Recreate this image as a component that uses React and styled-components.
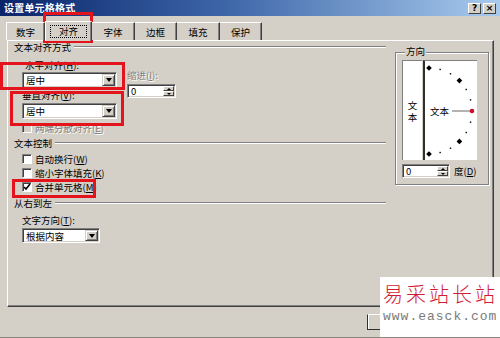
import styled, { createGlobalStyle } from "styled-components";

const Global = createGlobalStyle`
  html, body { margin: 0; padding: 0; background: #d4d0c8; }
  body {
    width: 500px; height: 338px; overflow: hidden;
    font-family: "Noto Sans CJK SC", "DejaVu Sans", sans-serif;
    font-size: 9.5px; line-height: 12px; color: #000;
  }
`;

const Window = styled.div`
  position: relative;
  width: 500px;
  height: 338px;
  background: #d4d0c8;
  display: flex;
  flex-direction: column;
  overflow: hidden;
  box-sizing: border-box;
  border-bottom: 1px solid #8a877f;
`;

const TitleBar = styled.div`
  height: 16px;
  flex: none;
  background: linear-gradient(to right, #0a246a 0%, #3d66a8 45%, #a9cbee 100%);
  display: flex;
  align-items: center;
  justify-content: space-between;
  padding: 0 4px 0 4px;
`;

const Title = styled.span`
  color: #fff;
  font-weight: bold;
  font-size: 10px;
  letter-spacing: 0.2px;
`;

const TitleButtons = styled.div`
  display: flex;
  gap: 2px;
  padding-top: 1px;
`;

const TitleButton = styled.span`
  width: 13px;
  height: 11px;
  box-sizing: border-box;
  background: #d4d0c8;
  border: 1px solid;
  border-color: #fff #404040 #404040 #fff;
  display: flex;
  align-items: center;
  justify-content: center;
  font-family: "DejaVu Sans", sans-serif;
  font-weight: bold;
  font-size: 9px;
  line-height: 9px;
`;

const TabStrip = styled.div`
  display: flex;
  align-items: flex-end;
  height: 20px;
  margin: 4px 0 0 6px;
`;

const Tab = styled.div`
  width: ${p => p.w}px;
  height: ${p => (p.active ? 20 : 18)}px;
  box-sizing: border-box;
  display: flex;
  align-items: center;
  justify-content: center;
  border-top: 1px solid #fff;
  border-left: ${p => (p.first || p.active ? "1px solid #fff" : "none")};
  border-right: 1px solid #404040;
  box-shadow: inset -1px 0 0 #808080;
  margin-bottom: ${p => (p.active ? -1 : 0)}px;
  background: #d4d0c8;
  position: relative;
  z-index: ${p => (p.active ? 2 : 1)};
`;

const FocusRect = styled.span`
  border: 1px dotted #000;
  padding: 0 8px;
  line-height: 11px;
`;

const Panel = styled.div`
  width: 487px;
  height: 267px;
  margin-left: 7px;
  box-sizing: border-box;
  border: 1px solid;
  border-color: #fff #404040 #404040 #fff;
  box-shadow: inset -1px -1px 0 #808080;
  display: flex;
`;

const LeftCol = styled.div`
  width: 387px;
  box-sizing: border-box;
  padding: 0 9px 0 6px;
  display: flex;
  flex-direction: column;
`;

const Heading = styled.div`
  display: flex;
  align-items: center;
  height: 12px;
  gap: 3px;
  margin-top: ${p => p.mt || 0}px;
  &::after {
    content: "";
    flex: 1;
    border-top: 1px solid #808080;
    border-bottom: 1px solid #fff;
  }
`;

const Label = styled.div`
  height: 12px;
  margin-top: ${p => p.mt || 0}px;
  padding-left: ${p => p.indent || 0}px;
  white-space: nowrap;
  color: ${p => (p.disabled ? "#808080" : "#000")};
  text-shadow: ${p => (p.disabled ? "1px 1px 0 #fff" : "none")};
`;

const AlignBlock = styled.div`
  display: flex;
  padding-left: 8px;
`;

const AlignCol = styled.div`
  display: flex;
  flex-direction: column;
  width: 95px;
`;

const IndentCol = styled.div`
  display: flex;
  flex-direction: column;
  margin-left: 10px;
  padding-top: 16px;
`;

const Field = styled.div`
  width: ${p => p.w}px;
  height: ${p => p.h || 16}px;
  margin-top: ${p => p.mt || 0}px;
  box-sizing: border-box;
  background: #fff;
  border: 1px solid;
  border-color: #808080 #fff #fff #808080;
  box-shadow: inset 1px 1px 0 #404040, inset -1px -1px 0 #d4d0c8;
  display: flex;
  align-items: stretch;
  justify-content: space-between;
  padding: 1px;
`;

const FieldText = styled.span`
  padding-left: 2px;
  display: flex;
  align-items: center;
`;

const DropButton = styled.span`
  width: 13px;
  box-sizing: border-box;
  background: #d4d0c8;
  border: 1px solid;
  border-color: #d4d0c8 #404040 #404040 #d4d0c8;
  box-shadow: inset 1px 1px 0 #fff, inset -1px -1px 0 #808080;
  display: flex;
  align-items: center;
  justify-content: center;
  &::after {
    content: "";
    border-left: 3.5px solid transparent;
    border-right: 3.5px solid transparent;
    border-top: 4px solid #000;
  }
`;

const SpinButtons = styled.span`
  width: 11px;
  display: flex;
  flex-direction: column;
`;

const SpinHalf = styled.span`
  flex: 1;
  box-sizing: border-box;
  background: #d4d0c8;
  border: 1px solid;
  border-color: #fff #404040 #404040 #fff;
  display: flex;
  align-items: center;
  justify-content: center;
  &::after {
    content: "";
    border-left: 2px solid transparent;
    border-right: 2px solid transparent;
    ${p => (p.up ? "border-bottom: 2px solid #000;" : "border-top: 2px solid #000;")}
  }
`;

const CheckRow = styled.div`
  display: flex;
  align-items: center;
  gap: 3px;
  height: 14px;
  padding-left: 8px;
  margin-top: ${p => p.mt || 0}px;
  color: ${p => (p.disabled ? "#808080" : "#000")};
  text-shadow: ${p => (p.disabled ? "1px 1px 0 #fff" : "none")};
  white-space: nowrap;
`;

const CheckBox = styled.span`
  width: 10px;
  height: 10px;
  box-sizing: border-box;
  flex: none;
  background: ${p => (p.disabled ? "#d4d0c8" : "#fff")};
  border: 1px solid;
  border-color: #808080 #fff #fff #808080;
  box-shadow: inset 1px 1px 0 #404040;
  display: flex;
  align-items: center;
  justify-content: center;
`;

const Orientation = styled.fieldset`
  width: 94px;
  height: 140px;
  box-sizing: border-box;
  margin: 4px 0 0 0;
  padding: 0 0 0 6px;
  border: 1px solid #808080;
  box-shadow: inset 1px 1px 0 #fff, 1px 1px 0 #fff;
  display: flex;
  flex-direction: column;
`;

const Legend = styled.legend`
  padding: 0 1px 3px 1px;
  margin-left: 3px;
  background: #d4d0c8;
  line-height: 12px;
`;

const DialFrame = styled.div`
  display: flex;
  height: 100px;
  width: 74px;
`;

const VerticalText = styled.div`
  width: 20px;
  box-sizing: border-box;
  background: #fff;
  border-left: 1px solid #808080;
  border-top: 1px solid #808080;
  display: flex;
  align-items: center;
  justify-content: center;
  writing-mode: vertical-rl;
  text-orientation: upright;
  letter-spacing: 2px;
  padding-top: 4px;
`;

const Dial = styled.div`
  width: 54px;
  box-sizing: border-box;
  background: #fff;
  border-left: 2px solid #303030;
  border-top: 1px solid #808080;
  margin-left: 1px;
`;

const DegreeRow = styled.div`
  display: flex;
  align-items: center;
  gap: 4px;
  margin-top: 4px;
`;

const Footer = styled.div`
  flex: 1;
  display: flex;
  justify-content: flex-end;
  align-items: flex-start;
  padding: 7px 60px 0 0;
`;

const Button = styled.div`
  width: 73px;
  height: 16px;
  box-sizing: border-box;
  border: 1px solid;
  border-color: #fff #303030 #303030 #303030;
  box-shadow: inset 1px 0 0 #fff;
`;

const Highlight = styled.div`
  position: absolute;
  left: ${p => p.x}px;
  top: ${p => p.y}px;
  width: ${p => p.w}px;
  height: ${p => p.h}px;
  box-sizing: border-box;
  border: 3px solid #e3141c;
  pointer-events: none;
`;

const Watermark = styled.div`
  position: absolute;
  right: 0;
  bottom: 0;
  width: 120px;
  height: 60px;
  background: #fff;
  display: flex;
  flex-direction: column;
  align-items: flex-start;
  padding-left: 3px;
  box-sizing: border-box;
`;

const MarkTitle = styled.div`
  color: #d11a36;
  font-size: 20px;
  line-height: 22px;
  font-weight: 300;
  letter-spacing: 3px;
  margin-top: 6px;
`;

const MarkUrl = styled.div`
  color: #7a7a7a;
  font-family: "Liberation Mono", monospace;
  font-size: 13px;
  line-height: 14px;
  letter-spacing: 1px;
  margin-top: 5px;
`;

const Select = ({ w, h, mt, value }) => (
  <Field w={w} h={h} mt={mt}>
    <FieldText>{value}</FieldText>
    <DropButton />
  </Field>
);

const Spin = ({ w, mt }) => (
  <Field w={w} h={14} mt={mt}>
    <FieldText>0</FieldText>
    <SpinButtons>
      <SpinHalf up />
      <SpinHalf />
    </SpinButtons>
  </Field>
);

const Tick = () => (
  <svg width="8" height="8" viewBox="0 0 8 8">
    <polyline points="1,4 3,6 7,1" fill="none" stroke="#000" strokeWidth="1.6" />
  </svg>
);

const Check = ({ label, checked, disabled, mt }) => (
  <CheckRow mt={mt} disabled={disabled}>
    <CheckBox disabled={disabled}>{checked && <Tick />}</CheckBox>
    <span>{label}</span>
  </CheckRow>
);

const DialDrawing = () => {
  const cx = 4;
  const cy = 50;
  const r = 43;
  const dots = [];
  for (let a = -90; a <= 90; a += 15) {
    if (a === 0) continue;
    const rad = (a * Math.PI) / 180;
    const x = cx + r * Math.cos(rad);
    const y = cy - r * Math.sin(rad);
    const big = a % 45 === 0;
    dots.push(
      big ? (
        <rect key={a} x={x - 2} y={y - 2} width="4" height="4" fill="#000" transform={`rotate(45 ${x} ${y})`} />
      ) : (
        <rect key={a} x={x - 0.7} y={y - 0.7} width="1.4" height="1.4" fill="#000" />
      )
    );
  }
  return (
    <svg width="52" height="99" viewBox="0 0 52 99">
      {dots}
      <text x="5" y="54" fontSize="9.5" fontFamily="Noto Sans CJK SC, sans-serif">文本</text>
      <line x1="27" y1={cy} x2="46" y2={cy} stroke="#808080" strokeWidth="1.2" />
      <circle cx={cx + r} cy={cy} r="2.3" fill="#c8102e" />
    </svg>
  );
};

export default function App() {
  return (
    <Window>
      <Global />
      <TitleBar>
        <Title>设置单元格格式</Title>
        <TitleButtons>
          <TitleButton>?</TitleButton>
          <TitleButton>×</TitleButton>
        </TitleButtons>
      </TitleBar>

      <TabStrip>
        <Tab w={39} first>数字</Tab>
        <Tab w={47} active><FocusRect>对齐</FocusRect></Tab>
        <Tab w={43}>字体</Tab>
        <Tab w={42}>边框</Tab>
        <Tab w={43}>填充</Tab>
        <Tab w={42}>保护</Tab>
      </TabStrip>

      <Panel>
        <LeftCol>
          <Heading>文本对齐方式</Heading>
          <AlignBlock>
            <AlignCol>
              <Label mt={6} indent={3}>水平对齐(<u>H</u>):</Label>
              <Select w={95} mt={1} value="居中" />
              <Label mt={1}>垂直对齐(<u>V</u>):</Label>
              <Select w={95} mt={2} value="居中" />
            </AlignCol>
            <IndentCol>
              <Label disabled>缩进(<u>I</u>):</Label>
              <Spin w={49} mt={3} />
            </IndentCol>
          </AlignBlock>
          <Check mt={2} disabled label={<>两端分散对齐(<u>E</u>)</>} />

          <Heading mt={2}>文本控制</Heading>
          <Check mt={3} label={<>自动换行(<u>W</u>)</>} />
          <Check label={<>缩小字体填充(<u>K</u>)</>} />
          <Check checked label={<>合并单元格(<u>M</u>)</>} />

          <Heading mt={3}>从右到左</Heading>
          <Label mt={5} indent={8}>文字方向(<u>T</u>):</Label>
          <AlignBlock>
            <Select w={78} h={15} mt={2} value="根据内容" />
          </AlignBlock>
        </LeftCol>

        <Orientation>
          <Legend>方向</Legend>
          <DialFrame>
            <VerticalText>文本</VerticalText>
            <Dial><DialDrawing /></Dial>
          </DialFrame>
          <DegreeRow>
            <Spin w={48} />
            <span>度(<u>D</u>)</span>
          </DegreeRow>
        </Orientation>
      </Panel>

      <Footer>
        <Button />
      </Footer>

      <Highlight x={43} y={12} w={50} h={31} />
      <Highlight x={0} y={62} w={125} h={28} />
      <Highlight x={10} y={91} w={114} h={35} />
      <Highlight x={12} y={179} w={84} h={19} />

      <Watermark>
        <MarkTitle>易采站长站</MarkTitle>
        <MarkUrl>www.easck.com</MarkUrl>
      </Watermark>
    </Window>
  );
}
